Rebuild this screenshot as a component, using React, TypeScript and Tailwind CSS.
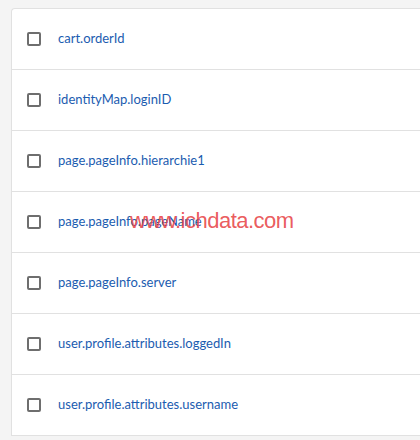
const FIELDS = [
  'cart.orderId',
  'identityMap.loginID',
  'page.pageInfo.hierarchie1',
  'page.pageInfo.pageName',
  'page.pageInfo.server',
  'user.profile.attributes.loggedIn',
  'user.profile.attributes.username',
]

function Checkbox() {
  return (
    <span className="block h-[14px] w-[14px] shrink-0 rounded-[2px] border-2 border-[#6e6e6e] bg-white" />
  )
}

export default function App() {
  return (
    <div className="relative h-[440px] w-[420px] overflow-hidden bg-[#f4f4f4] pl-[11px] pt-[8px] font-['Lato',sans-serif]">
      <ul className="rounded-tl-[4px] border-l border-t border-[#e1e1e1] bg-white">
        {FIELDS.map((name) => (
          <li key={name} className="flex h-[61px] items-center gap-[17px] border-b border-[#e1e1e1] pl-[15px]">
            <Checkbox />
            <span className="text-[13px] text-[#1b5cb0]">{name}</span>
          </li>
        ))}
      </ul>
      {/* watermark stamped over the list */}
      <span className="pointer-events-none absolute left-[130px] top-[210px] text-[22px] leading-none tracking-[-0.5px] text-[#e8484a]/90 font-['Liberation_Sans',sans-serif]">
        www.ichdata.com
      </span>
    </div>
  )
}
